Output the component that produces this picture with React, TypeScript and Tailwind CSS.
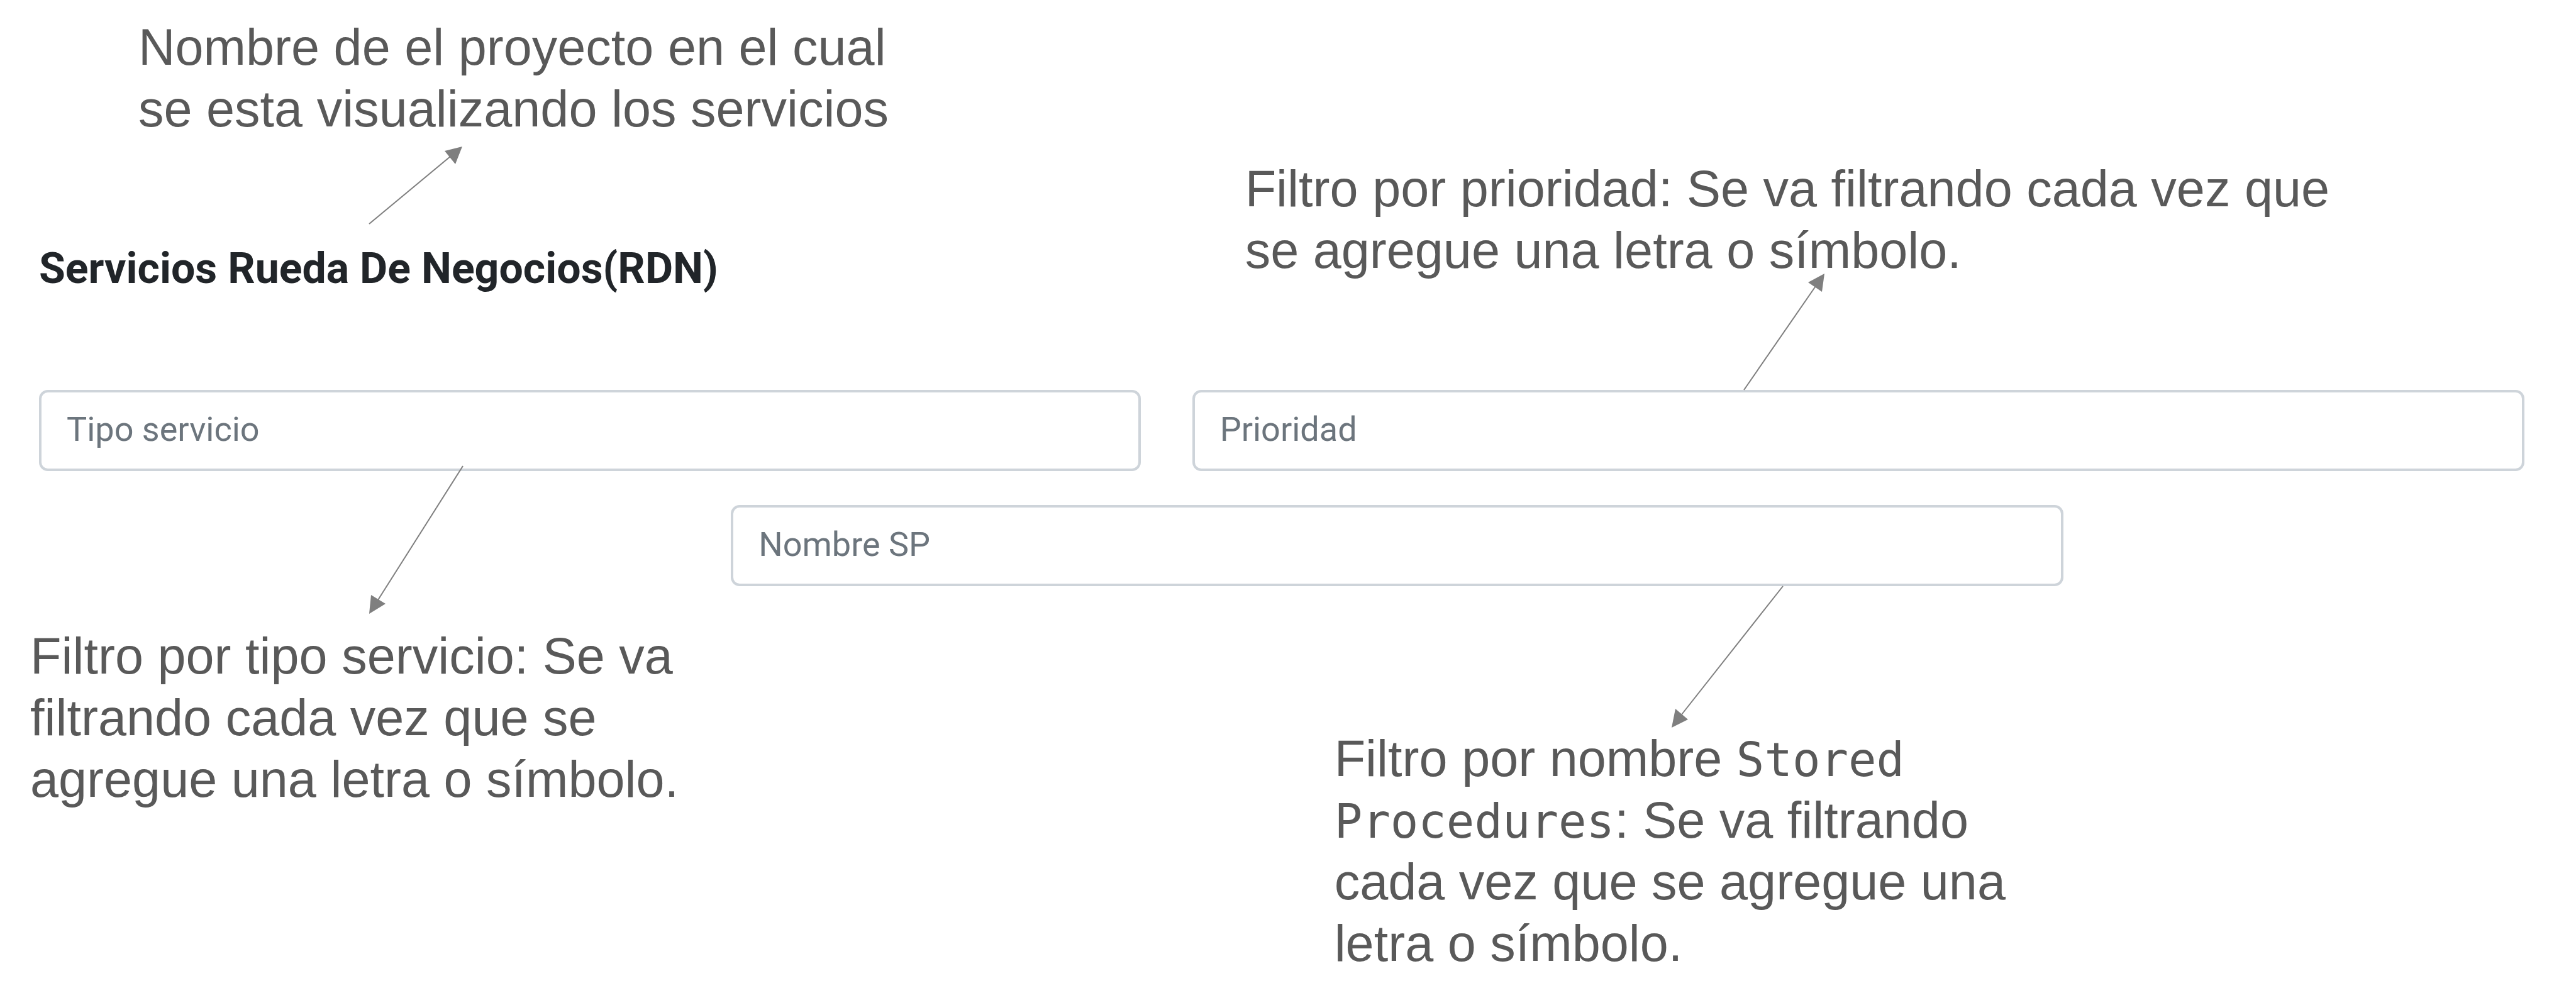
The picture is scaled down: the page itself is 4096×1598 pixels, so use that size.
import type { ReactNode } from 'react'

type Point = [number, number]

/** Thin annotation arrow: a straight shaft that ends in a solid triangular head. */
function Arrow({
  size,
  tail,
  neck,
  head,
  className,
}: {
  size: Point
  tail: Point
  neck: Point
  head: string
  className: string
}) {
  return (
    <svg
      aria-hidden="true"
      width={size[0]}
      height={size[1]}
      viewBox={`0 0 ${size[0]} ${size[1]}`}
      className={`pointer-events-none relative z-10 shrink-0 overflow-visible ${className}`}
    >
      <line x1={tail[0]} y1={tail[1]} x2={neck[0]} y2={neck[1]} stroke="#7f7f7f" strokeWidth="2" />
      <polygon points={head} fill="#7f7f7f" />
    </svg>
  )
}

function Note({ children, className = '' }: { children: ReactNode; className?: string }) {
  return (
    <p
      className={`font-['Liberation_Sans',Arial,sans-serif] text-[81px] leading-[98px] whitespace-nowrap text-[#595959] ${className}`}
    >
      {children}
    </p>
  )
}

function Filter({ label, name, className }: { label: string; name: string; className: string }) {
  return (
    <input
      type="text"
      name={name}
      aria-label={label}
      placeholder={label}
      className={`h-[129px] w-full min-w-0 rounded-[14px] border-4 border-[#ced4da] bg-white px-10 pb-1 text-[54px] text-[#495057] placeholder:text-[#6c757d] placeholder:opacity-100 ${className}`}
    />
  )
}

export default function App() {
  return (
    <main className="min-h-screen overflow-x-hidden bg-white pr-[82px] pl-[62px] font-[Roboto,sans-serif]">
      <header className="grid grid-cols-11 gap-x-[82px]">
        <div className="col-span-5 pt-[26px] pb-[153px]">
          <Note className="pl-[158px]">
            Nombre de el proyecto en el cual
            <br />
            se esta visualizando los servicios
          </Note>
          <Arrow
            size={[148, 123]}
            tail={[0, 123]}
            neck={[130, 15]}
            head="148,0 120,7 137,28"
            className="mt-[11px] ml-[30%]"
          />
          <h1 className="mt-[31px] text-[68px] leading-[80px] font-bold whitespace-nowrap text-[#212529]">
            Servicios Rueda De Negocios(RDN)
          </h1>
        </div>
        <div className="col-span-6 flex flex-col justify-end pl-[84px]">
          <Note>
            Filtro por prioridad: Se va filtrando cada vez que
            <br />
            se agregue una letra o símbolo.
          </Note>
          <Arrow
            size={[128, 185]}
            tail={[0, 185]}
            neck={[114, 20]}
            head="128,0 102,14 124,29"
            className="-mt-3 ml-[39%]"
          />
        </div>
      </header>

      <form className="grid grid-cols-11 gap-x-[82px] gap-y-[54px]">
        <Filter label="Tipo servicio" name="tipo" className="col-span-5" />
        <Filter label="Prioridad" name="prioridad" className="col-span-6" />
        <Filter label="Nombre SP" name="nombre" className="col-span-6 col-start-4" />
      </form>

      <section className="grid grid-cols-11 gap-x-[82px]">
        <div className="col-span-5 -mt-[191px]">
          <Arrow
            size={[149, 235]}
            tail={[149, 0]}
            neck={[14, 213]}
            head="0,235 3,205 26,219"
            className="ml-[30%]"
          />
          <Note className="mt-[18px] -ml-[14px]">
            Filtro por tipo servicio: Se va
            <br />
            filtrando cada vez que se
            <br />
            agregue una letra o símbolo.
          </Note>
        </div>
        <div className="col-span-6">
          <Arrow
            size={[177, 225]}
            tail={[177, 0]}
            neck={[16, 204]}
            head="0,225 6,195 26,212"
            className="ml-[36%]"
          />
          <Note className="pl-[226px]">
            Filtro por nombre{' '}
            <span className="font-['DejaVu_Sans_Mono',monospace] text-[74px] leading-none">Stored</span>
            <br />
            <span className="font-['DejaVu_Sans_Mono',monospace] text-[74px] leading-none">Procedures</span>: Se
            va filtrando
            <br />
            cada vez que se agregue una
            <br />
            letra o símbolo.
          </Note>
        </div>
      </section>
    </main>
  )
}
